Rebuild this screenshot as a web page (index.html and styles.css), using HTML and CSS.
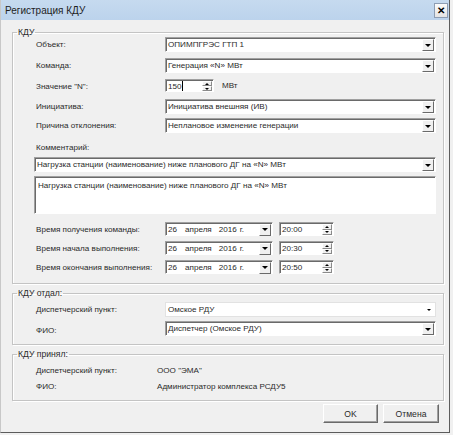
FILE: index.html
```html
<!DOCTYPE html>
<html lang="ru">
<head>
<meta charset="utf-8">
<title>Регистрация КДУ</title>
<link rel="stylesheet" href="styles.css">
</head>
<body>
<div class="window">
  <div class="titlebar">
    <span class="title">Регистрация КДУ</span>
    <span class="close">✕</span>
  </div>
  <div class="content">
    <fieldset class="group g1">
      <legend>КДУ</legend>
      <div class="form1">
        <span class="lbl">Объект:</span>
        <div class="combo"><span class="val">ОПИМПГРЭС ГТП 1</span><span class="dd"></span></div>

        <span class="lbl">Команда:</span>
        <div class="combo"><span class="val">Генерация «N» МВт</span><span class="dd"></span></div>

        <span class="lbl">Значение "N":</span>
        <div class="nrow">
          <div class="spin"><span class="val">150<i class="caret"></i></span><span class="arrows"><b class="up"></b><b class="down"></b></span></div>
          <span class="unit">МВт</span>
        </div>

        <span class="lbl">Инициатива:</span>
        <div class="combo"><span class="val">Инициатива внешняя (ИВ)</span><span class="dd"></span></div>

        <span class="lbl">Причина отклонения:</span>
        <div class="combo"><span class="val">Неплановое изменение генерации</span><span class="dd"></span></div>

        <span class="lbl wide">Комментарий:</span>

        <div class="combo wide"><span class="val">Нагрузка станции (наименование) ниже планового ДГ на «N» МВт</span><span class="dd"></span></div>

        <div class="memo wide">Нагрузка станции (наименование) ниже планового ДГ на «N» МВт</div>

        <span class="lbl">Время получения команды:</span>
        <div class="dtrow">
          <div class="combo date"><span class="val"><span class="d">26</span><span class="m">апреля</span><span class="y">2016</span><span class="g">г.</span></span><span class="dd"></span></div>
          <div class="spin time"><span class="val">20:00</span><span class="arrows"><b class="up"></b><b class="down"></b></span></div>
        </div>

        <span class="lbl">Время начала выполнения:</span>
        <div class="dtrow">
          <div class="combo date"><span class="val"><span class="d">26</span><span class="m">апреля</span><span class="y">2016</span><span class="g">г.</span></span><span class="dd"></span></div>
          <div class="spin time"><span class="val">20:30</span><span class="arrows"><b class="up"></b><b class="down"></b></span></div>
        </div>

        <span class="lbl">Время окончания выполнения:</span>
        <div class="dtrow">
          <div class="combo date"><span class="val"><span class="d">26</span><span class="m">апреля</span><span class="y">2016</span><span class="g">г.</span></span><span class="dd"></span></div>
          <div class="spin time"><span class="val">20:50</span><span class="arrows"><b class="up"></b><b class="down"></b></span></div>
        </div>
      </div>
    </fieldset>

    <fieldset class="group g2">
      <legend>КДУ отдал:</legend>
      <div class="form2">
        <span class="lbl">Диспетчерский пункт:</span>
        <div class="combo flat"><span class="val">Омское РДУ</span><span class="tri"></span></div>
        <span class="lbl low">ФИО:</span>
        <div class="combo"><span class="val">Диспетчер (Омское РДУ)</span><span class="dd"></span></div>
      </div>
    </fieldset>

    <fieldset class="group g3">
      <legend>КДУ принял:</legend>
      <div class="form3">
        <span class="lbl">Диспетчерский пункт:</span>
        <span class="txt">ООО "ЭМА"</span>
        <span class="lbl">ФИО:</span>
        <span class="txt">Администратор комплекса РСДУ5</span>
      </div>
    </fieldset>

    <div class="buttons">
      <button class="btn ok">OK</button>
      <button class="btn cancel">Отмена</button>
    </div>
  </div>
</div>
</body>
</html>
```

FILE: styles.css
```css
html, body {
  margin: 0;
  padding: 0;
}
body {
  background: #f0f0f0;
  font-family: "Liberation Sans", Arial, sans-serif;
  font-size: 8.1px;
  color: #2a2a2a;
}
.window {
  width: 450px;
  height: 433px;
  box-sizing: border-box;
  border-left: 1px solid #c8c8c8;
  border-right: 1px solid #5c5c5c;
  border-bottom: 1px solid #5c5c5c;
  display: flex;
  flex-direction: column;
  background: #f0f0f0;
}
.titlebar {
  height: 20px;
  flex: none;
  background: linear-gradient(#c6daef, #bcd3ec);
  display: flex;
  align-items: center;
  justify-content: space-between;
  padding: 0 1px 0 4px;
}
.title {
  font-size: 10px;
  color: #1e1e1e;
}
.close {
  width: 14px;
  height: 15px;
  box-sizing: border-box;
  border: 1px solid #8d9db3;
  background: linear-gradient(#fbfbfb, #e4e4e4);
  font-size: 10px;
  font-weight: bold;
  line-height: 13px;
  text-align: center;
  color: #000;
}
.content {
  padding: 7px 5px 0 11px;
  display: flex;
  flex-direction: column;
}
.group {
  margin: 0;
  padding: 0 7px 9px 4px;
  border: 1px solid #c4c4c4;
  box-shadow: inset 1px 1px 0 #fff, 1px 1px 0 #fff;
  min-width: 0;
}
.group legend {
  padding: 0 1px;
  line-height: 10px;
  font-size: 8.6px;
}
.g2, .g3 {
  margin-top: 4px;
}
.g2 {
  padding-bottom: 7px;
}
.g3 {
  padding-bottom: 5px;
}
.form1 {
  display: grid;
  grid-template-columns: 131px 1fr;
  grid-template-rows: 21px 21px 20px 19px 22px 17px 19px 46px 19px 19px 14px;
  margin-left: 17px;
}
.form2 {
  display: grid;
  grid-template-columns: 131px 1fr;
  grid-template-rows: 19px 16px;
  margin-left: 17px;
  margin-top: 4px;
}
.form3 {
  display: grid;
  grid-template-columns: 123px 1fr;
  grid-auto-rows: 16px;
  line-height: 16px;
  margin-left: 17px;
  margin-top: 4px;
}
.lbl {
  padding-left: 2px;
  line-height: 16px;
  white-space: nowrap;
}
.lbl.low {
  line-height: 19px;
}
.form3 .lbl {
  line-height: 16px;
}
.wide {
  grid-column: 1 / -1;
}
.lbl.wide {
  align-self: start;
}
.combo {
  height: 15px;
  box-sizing: border-box;
  border: 1px solid;
  border-color: #a0a0a0 #fff #fff #a0a0a0;
  box-shadow: inset 1px 1px 0 #6a6a6a;
  background: #fff;
  display: flex;
  align-items: center;
}
.val {
  flex: 1;
  padding-left: 2px;
  white-space: nowrap;
  overflow: hidden;
  line-height: 13px;
}
.dd {
  flex: none;
  width: 12px;
  height: 12px;
  margin: 1px 1px 0 0;
  box-sizing: border-box;
  border: 1px solid;
  border-color: #fff #6a6a6a #6a6a6a #fff;
  background: #f0f0f0;
  display: flex;
  align-items: center;
  justify-content: center;
}
.dd::after, .tri::after {
  content: "";
  border-left: 3px solid transparent;
  border-right: 3px solid transparent;
  border-top: 3px solid #000;
}
.tri {
  width: 12px;
  display: flex;
  justify-content: center;
}
.tri::after {
  border-left-width: 2px;
  border-right-width: 2px;
  border-top-width: 2px;
}
.combo.flat {
  border: 1px solid #e2e2e2;
  box-shadow: none;
}
.nrow {
  display: flex;
  align-items: center;
  height: 13px;
}
.spin {
  width: 49px;
  height: 13px;
  box-sizing: border-box;
  border: 1px solid;
  border-color: #a0a0a0 #fff #fff #a0a0a0;
  box-shadow: inset 1px 1px 0 #6a6a6a;
  background: #fff;
  display: flex;
}
.caret {
  display: inline-block;
  width: 1px;
  height: 10px;
  background: #000;
  vertical-align: -2px;
}
.arrows {
  width: 10px;
  display: flex;
  flex-direction: column;
  margin: 1px 1px 0 0;
}
.arrows b {
  flex: 1;
  background: #f0f0f0;
  border: 1px solid;
  border-color: #fff #8a8a8a #8a8a8a #fff;
  display: flex;
  align-items: center;
  justify-content: center;
}
.arrows .up::after {
  content: "";
  border-left: 2px solid transparent;
  border-right: 2px solid transparent;
  border-bottom: 2px solid #000;
}
.arrows .down::after {
  content: "";
  border-left: 2px solid transparent;
  border-right: 2px solid transparent;
  border-top: 2px solid #000;
}
.unit {
  margin-left: 8px;
}
.memo {
  height: 38px;
  box-sizing: border-box;
  border: 1px solid;
  border-color: #a0a0a0 #fff #fff #a0a0a0;
  box-shadow: inset 1px 1px 0 #6a6a6a;
  background: #fff;
  padding: 3px 3px;
  line-height: 11px;
}
.dtrow {
  display: flex;
  gap: 6px;
}
.date {
  width: 108px;
  height: 14px;
}
.date .val {
  display: flex;
}
.date .m {
  margin-left: 8px;
}
.date .y {
  margin-left: 7px;
}
.date .g {
  margin-left: 3px;
}
.time {
  width: 55px;
  height: 14px;
}
.txt {
  white-space: nowrap;
}
.buttons {
  display: flex;
  justify-content: flex-end;
  gap: 5px;
  margin: 3px 5px 0 0;
}
.btn {
  height: 19px;
  padding: 0;
  font: inherit;
  font-size: 8.6px;
  color: #2a2a2a;
  background: #f0f0f0;
  border: 1px solid;
  border-color: #fff #6a6a6a #6a6a6a #fff;
  box-shadow: inset -1px -1px 0 #a0a0a0;
}
.ok {
  width: 55px;
}
.cancel {
  width: 56px;
}
```
